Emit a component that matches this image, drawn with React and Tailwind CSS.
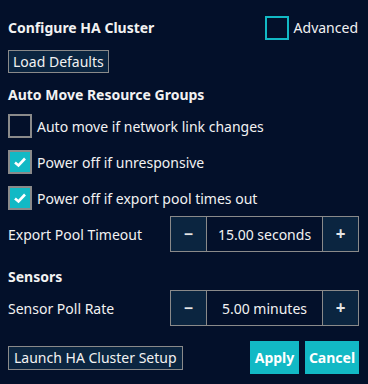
import { useState } from 'react'

const font = { fontFamily: '"Noto Sans", "Open Sans", sans-serif' }

function Check({ checked, onChange, label, accentBorder }) {
  return (
    <label className="flex cursor-pointer items-center gap-[5px]" onClick={onChange}>
      <span
        className={
          'flex h-[24px] w-[24px] items-center justify-center border-2 ' +
          (checked
            ? 'border-[#8a8a8a] bg-[#12b9c5]'
            : accentBorder
              ? 'border-[#12b9c5] bg-transparent'
              : 'border-[#8a8a8a] bg-transparent')
        }
      >
        {checked && (
          <svg width="16" height="16" viewBox="0 0 16 16">
            <path d="M3 8.5 L6.5 11.5 L13 4.5" fill="none" stroke="#fff" strokeWidth="2.6" />
          </svg>
        )}
      </span>
      <span className="text-[14px] text-[#f2f2f2]">{label}</span>
    </label>
  )
}

function Stepper({ value, onDec, onInc }) {
  return (
    <div className="flex h-[36px] w-[189px] border border-[#8a8a8a]">
      <button
        type="button"
        onClick={onDec}
        className="flex w-[36px] items-center justify-center border-r border-[#8a8a8a] bg-[#0b2540] text-[16px] font-bold text-[#e6e6e6]"
      >
        −
      </button>
      <div className="flex flex-1 items-center justify-center text-[14px] text-[#f2f2f2]">
        {value}
      </div>
      <button
        type="button"
        onClick={onInc}
        className="flex w-[36px] items-center justify-center border-l border-[#8a8a8a] bg-[#0b2540] text-[17px] font-bold text-[#e6e6e6]"
      >
        +
      </button>
    </div>
  )
}

export default function App() {
  const [advanced, setAdvanced] = useState(false)
  const [autoMove, setAutoMove] = useState(false)
  const [offUnresp, setOffUnresp] = useState(true)
  const [offPool, setOffPool] = useState(true)
  const [timeout, setTimeoutVal] = useState(15)
  const [poll, setPoll] = useState(5)

  return (
    <div className="h-[384px] w-[368px] bg-[#03102a] px-[8px] pt-[16px] text-[#f2f2f2]" style={font}>
      <div className="flex h-[23px] items-center justify-between">
        <h2 className="text-[14px] font-bold">Configure HA Cluster</h2>
        <div className="pr-[2px]">
          <Check checked={advanced} onChange={() => setAdvanced((v) => !v)} label="Advanced" accentBorder />
        </div>
      </div>

      <button
        type="button"
        className="mt-[11px] h-[23px] border border-[#8a8a8a] bg-[#0b2540] px-[4px] text-[14px] leading-none text-[#f2f2f2]"
      >
        Load Defaults
      </button>

      <h3 className="mt-[13px] text-[14px] font-bold leading-[18px]">Auto Move Resource Groups</h3>

      <div className="mt-[10px] flex flex-col gap-[12px]">
        <Check checked={autoMove} onChange={() => setAutoMove((v) => !v)} label="Auto move if network link changes" />
        <Check checked={offUnresp} onChange={() => setOffUnresp((v) => !v)} label="Power off if unresponsive" />
        <Check checked={offPool} onChange={() => setOffPool((v) => !v)} label="Power off if export pool times out" />
      </div>

      <div className="mt-[6px] flex items-center justify-between pr-[1px]">
        <span className="text-[14px]">Export Pool Timeout</span>
        <Stepper
          value={`${timeout.toFixed(2)} seconds`}
          onDec={() => setTimeoutVal((v) => Math.max(0, v - 1))}
          onInc={() => setTimeoutVal((v) => v + 1)}
        />
      </div>

      <h3 className="mt-[16px] text-[14px] font-bold leading-[18px]">Sensors</h3>

      <div className="mt-[4px] flex items-center justify-between pr-[1px]">
        <span className="text-[14px]">Sensor Poll Rate</span>
        <Stepper
          value={`${poll.toFixed(2)} minutes`}
          onDec={() => setPoll((v) => Math.max(0, v - 1))}
          onInc={() => setPoll((v) => v + 1)}
        />
      </div>

      <div className="mt-[15px] flex items-center justify-between pr-[1px]">
        <button
          type="button"
          className="h-[24px] border border-[#8a8a8a] bg-[#0b2540] px-[5px] text-[14px] leading-none text-[#f2f2f2]"
        >
          Launch HA Cluster Setup
        </button>
        <div className="flex gap-[6px]">
          <button type="button" className="h-[33px] w-[49px] bg-[#12b9c5] text-[14px] font-bold text-white">
            Apply
          </button>
          <button type="button" className="h-[33px] w-[54px] bg-[#12b9c5] text-[14px] font-bold text-white">
            Cancel
          </button>
        </div>
      </div>
    </div>
  )
}
